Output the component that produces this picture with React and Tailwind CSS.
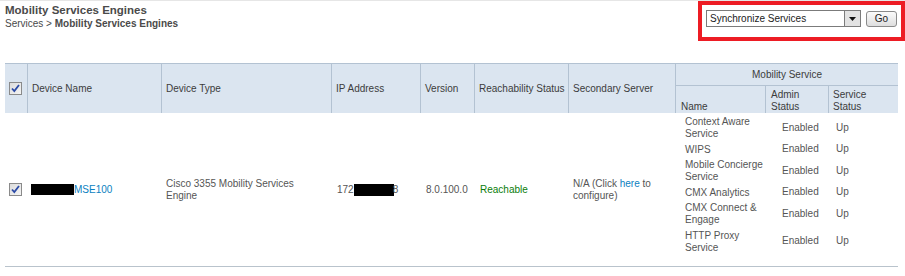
import React from "react";

const FONT = { fontFamily: "Tahoma, 'Liberation Sans', Arial, sans-serif" };

const SERVICES = [
  { name: "Context Aware Service", admin: "Enabled", status: "Up" },
  { name: "WIPS", admin: "Enabled", status: "Up" },
  { name: "Mobile Concierge Service", admin: "Enabled", status: "Up" },
  { name: "CMX Analytics", admin: "Enabled", status: "Up" },
  { name: "CMX Connect & Engage", admin: "Enabled", status: "Up" },
  { name: "HTTP Proxy Service", admin: "Enabled", status: "Up" },
];

function Check() {
  return (
    <span className="flex items-center justify-center w-[13px] h-[13px] border border-[#8a8a8a] bg-gradient-to-br from-[#dcdcdc] to-[#f4f4f4]">
      <svg width="9" height="9" viewBox="0 0 9 9">
        <path d="M1 4.5 L3.3 7 L8 1" fill="none" stroke="#2b4aa6" strokeWidth="1.8" />
      </svg>
    </span>
  );
}

export default function App() {
  return (
    <div className="w-[905px] h-[276px] bg-white border-t border-[#e6e6e6] text-[10px] leading-[12px] text-[#555]" style={FONT}>
      <div className="flex justify-between items-start">
        <div className="pl-[5px] pt-[2px]">
          <div className="text-[11.5px] leading-[14px] font-bold text-[#4a4a4a]">Mobility Services Engines</div>
          <div className="mt-[1px] text-[#4a4a4a]">
            Services &gt; <span className="font-bold">Mobility Services Engines</span>
          </div>
        </div>
        <div className="w-[207px] h-[40px] border-[4px] border-[#ed1c24] flex items-start gap-[5px] pl-[4px] pt-[5px]">
          <div className="flex w-[155px] h-[17px] border border-[#7b7b7b] bg-white">
            <span className="flex-1 pl-[3px] leading-[15px] text-[#222]">Synchronize Services</span>
            <span className="w-[16px] h-full flex items-center justify-center bg-[#e2e2e2] border-l border-[#7b7b7b]">
              <svg width="7" height="4" viewBox="0 0 7 4">
                <path d="M0 0 H7 L3.5 4 Z" fill="#111" />
              </svg>
            </span>
          </div>
          <button className="w-[31px] h-[16px] mt-[1px] border border-[#8a8a8a] rounded-[3px] bg-gradient-to-b from-[#fbfbfb] to-[#dedede] text-[10px] leading-[14px] text-[#222]">
            Go
          </button>
        </div>
      </div>

      <div className="ml-[5px] mt-[22px] w-[893px]">
        <div className="grid grid-cols-[22px_134px_170px_89px_54px_94px_107px_90px_63px_70px] grid-rows-[22px_27px] bg-[#dbe5f0] border-t border-[#b3c2d2] text-[#3c3c3c]">
          <div className="row-span-2 flex items-center pl-[4px]">
            <Check />
          </div>
          <div className="row-span-2 flex items-center border-l border-[#b3c2d2] pl-[4px]">Device Name</div>
          <div className="row-span-2 flex items-center border-l border-[#b3c2d2] pl-[4px]">Device Type</div>
          <div className="row-span-2 flex items-center border-l border-[#b3c2d2] pl-[4px]">IP Address</div>
          <div className="row-span-2 flex items-center border-l border-[#b3c2d2] pl-[4px]">Version</div>
          <div className="row-span-2 flex items-center border-l border-[#b3c2d2] pl-[4px]">Reachability Status</div>
          <div className="row-span-2 flex items-center border-l border-[#b3c2d2] pl-[4px]">Secondary Server</div>
          <div className="col-span-3 flex items-center justify-center border-l border-b border-[#b3c2d2]">Mobility Service</div>
          <div className="flex items-end border-l border-[#b3c2d2] pl-[5px]">Name</div>
          <div className="flex items-end border-l border-[#b3c2d2] pl-[5px] pr-[4px]">Admin Status</div>
          <div className="flex items-end border-l border-[#b3c2d2] pl-[4px] pr-[4px]">Service Status</div>
        </div>

        <div className="flex items-center h-[154px] border-b border-[#b9c3cc]">
          <div className="w-[22px] pl-[4px] flex">
            <Check />
          </div>
          <div className="w-[134px] pl-[4px] flex items-center">
            <span className="inline-block w-[43px] h-[11px] bg-black" />
            <a className="text-[#0b7fc1]">MSE100</a>
          </div>
          <div className="w-[170px] pl-[5px] pr-[22px]">Cisco 3355 Mobility Services Engine</div>
          <div className="w-[89px] pl-[6px] flex items-center">
            172
            <span className="inline-block w-[40px] h-[12px] bg-black" />
            <span className="-ml-[1px]">8</span>
          </div>
          <div className="w-[54px] pl-[6px]">8.0.100.0</div>
          <div className="w-[94px] pl-[6px] text-[#0a7d0a]">Reachable</div>
          <div className="w-[107px] pl-[5px] pr-[4px]">
            N/A (Click <a className="text-[#0b7fc1]">here</a> to configure)
          </div>
          <div className="self-start w-[223px] pt-[1px] pl-[10px]">
            <div className="grid grid-cols-[97px_54px_1fr]">
              {SERVICES.map((s) => (
                <React.Fragment key={s.name}>
                  <div className="pt-[2px] pb-[1.5px] pr-[7px]">{s.name}</div>
                  <div className="flex items-center">{s.admin}</div>
                  <div className="flex items-center">{s.status}</div>
                </React.Fragment>
              ))}
            </div>
          </div>
        </div>
      </div>
    </div>
  );
}
